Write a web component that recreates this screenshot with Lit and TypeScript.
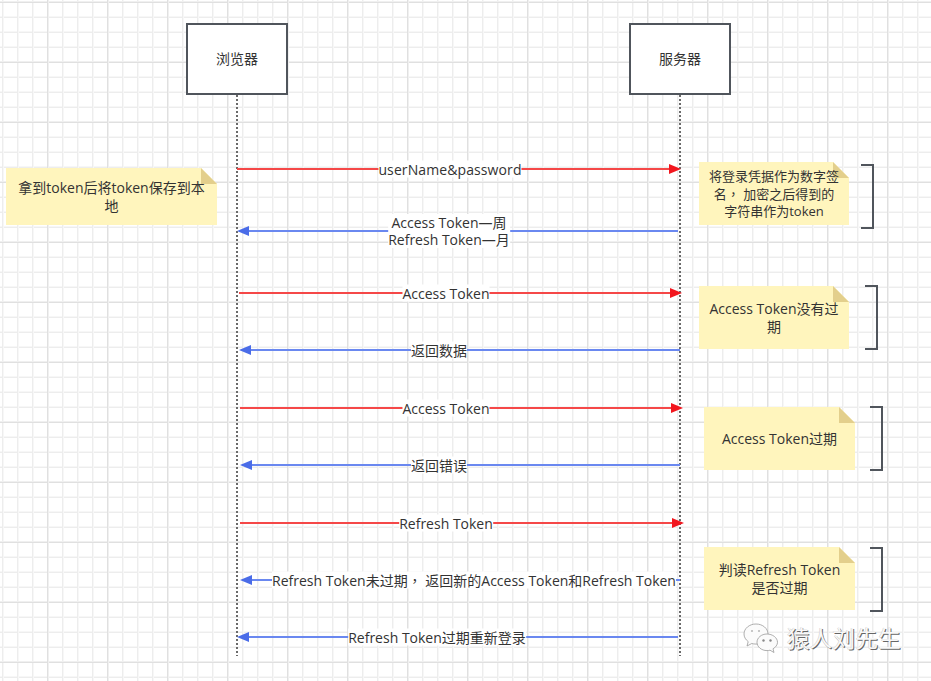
import { LitElement, html, css, svg } from "lit";
import { customElement } from "lit/decorators.js";

const RED = { line: "#f54848", head: "#f2161e" };
const BLUE = { line: "#6a88f0", head: "#4a6ce8" };

// x1 = tail, x2 = tip
const arrows = [
  { y: 169, x1: 237, x2: 681, c: RED, text: "userName&password", cx: 450, sp: 0.1 },
  { y: 231, x1: 678, x2: 237, c: BLUE, text: "Access Token—周\nRefresh Token—月", cx: 449, sp: 0 },
  { y: 293, x1: 239, x2: 682, c: RED, text: "Access Token", cx: 446, sp: 0 },
  { y: 350, x1: 680, x2: 239, c: BLUE, text: "返回数据", cx: 439, sp: 0 },
  { y: 408, x1: 240, x2: 683, c: RED, text: "Access Token", cx: 446, sp: 0 },
  { y: 465, x1: 680, x2: 240, c: BLUE, text: "返回错误", cx: 439, sp: 0 },
  { y: 523, x1: 240, x2: 684, c: RED, text: "Refresh Token", cx: 446, sp: 0 },
  { y: 580, x1: 680, x2: 240, c: BLUE, text: "Refresh Token未过期， 返回新的Access Token和Refresh Token", cx: 474, sp: 0 },
  { y: 637, x1: 678, x2: 237, c: BLUE, text: "Refresh Token过期重新登录", cx: 437, sp: 0 },
];

const notes = [
  { x: 6, y: 168, w: 211, h: 57, text: "拿到token后将token保存到本地", size: 14, lh: 18 },
  { x: 699, y: 162, w: 150, h: 63, text: "将登录凭据作为数字签\n名， 加密之后得到的\n字符串作为token", size: 13, lh: 17 },
  { x: 699, y: 286, w: 150, h: 63, text: "Access Token没有过期", size: 14, lh: 18 },
  { x: 704, y: 407, w: 151, h: 63, text: "Access Token过期", size: 14, lh: 18 },
  { x: 704, y: 547, w: 151, h: 63, text: "判读Refresh Token是否过期", size: 14, lh: 18 },
];

const brackets = [
  { x: 861, y1: 165, y2: 228, r: 873 },
  { x: 865, y1: 286, y2: 349, r: 877 },
  { x: 870, y1: 407, y2: 470, r: 882 },
  { x: 870, y1: 548, y2: 611, r: 882 },
];

// The full-width comma sits centred in its cell in the reference, as in the TC glyphs.
function withComma(text: string) {
  const parts = text.split("，");
  return parts.map((p, i) =>
    i === 0 ? p : html`<span class="tc">，</span>${p}`
  );
}

@customElement("app-root")
export class AppRoot extends LitElement {
  static styles = css`
    :host {
      display: block;
      width: 931px;
      height: 681px;
      overflow: hidden;
    }
    .canvas {
      position: relative;
      width: 931px;
      height: 681px;
      overflow: hidden;
      background-color: #fff;
      background-image:
        linear-gradient(to right, #e0e0e0 0 1px, #f0f0f0 1px 2px, transparent 2px),
        linear-gradient(to bottom, #f0f0f0 0 1px, #e0e0e0 1px 2px, transparent 2px),
        linear-gradient(to right, #ededed 0 1px, #f7f7f7 1px 2px, transparent 2px),
        linear-gradient(to bottom, #f7f7f7 0 1px, #ededed 1px 2px, transparent 2px);
      background-size: 60px 60px, 60px 60px, 15px 15px, 15px 15px;
      background-position: 47px 1px, 47px 1px, 2px 1px, 2px 1px;
      font-family: "Open Sans", "Noto Sans CJK SC", sans-serif;
      color: #333;
    }
    .tc {
      font-family: "Noto Sans CJK TC", sans-serif;
    }
    svg.lines {
      position: absolute;
      inset: 0;
    }
    .actor {
      position: absolute;
      top: 23px;
      width: 102px;
      height: 72px;
      box-sizing: border-box;
      border: 2px solid #50555c;
      padding-bottom: 2px;
      background: #fff;
      display: flex;
      align-items: center;
      justify-content: center;
      font-size: 14px;
    }
    .label {
      position: absolute;
      transform: translate(-50%, -50%);
      background: #fff;
      font-size: 14px;
      line-height: 17px;
      text-align: center;
      white-space: pre;
    }
    .note {
      position: absolute;
      display: flex;
      align-items: center;
      justify-content: center;
      box-sizing: border-box;
      padding: 0 10px;
      text-align: center;
      white-space: pre-line;
    }
    .note > div {
      position: relative;
    }
    .paper {
      position: absolute;
      inset: 0;
      background: #fff5bd;
      clip-path: polygon(0 0, calc(100% - 16px) 0, 100% 16px, 100% 100%, 0 100%);
    }
    .fold {
      position: absolute;
      top: 0;
      right: 0;
      width: 16px;
      height: 16px;
      background: #e3cf8c;
      clip-path: polygon(0 0, 100% 100%, 0 100%);
    }
    .mark {
      position: absolute;
      left: 743px;
      top: 621px;
      display: flex;
      align-items: center;
      gap: 8px;
    }
    .mark span {
      font-size: 22.5px;
      line-height: 36px;
      color: #f8f8f8;
      letter-spacing: 0.3px;
      text-shadow: 1px 1px 0 #666, -0.5px -0.5px 0 #ccc;
    }
  `;

  render() {
    return html`
      <div class="canvas">
        <div class="actor" style="left:186px">浏览器</div>
        <div class="actor" style="left:629px">服务器</div>

        <svg class="lines" width="931" height="681" viewBox="0 0 931 681">
          <line x1="237" y1="95" x2="237" y2="656" stroke="#6a6a6a" stroke-width="2" stroke-dasharray="2 2" />
          <line x1="680" y1="95" x2="680" y2="656" stroke="#6a6a6a" stroke-width="2" stroke-dasharray="2 2" />
          ${arrows.map((a) => {
            const dir = a.x2 > a.x1 ? 1 : -1;
            const base = a.x2 - dir * 12;
            return svg`
              <line x1=${a.x1} y1=${a.y} x2=${base} y2=${a.y} stroke=${a.c.line} stroke-width="2" />
              <polygon points="${a.x2},${a.y} ${base},${a.y - 5} ${base},${a.y + 5}" fill=${a.c.head} />
            `;
          })}
          ${brackets.map(
            (b) => svg`
              <polyline points="${b.x},${b.y1} ${b.r},${b.y1} ${b.r},${b.y2} ${b.x},${b.y2}"
                fill="none" stroke="#50555c" stroke-width="2" />
            `
          )}
        </svg>

        ${arrows.map(
          (a) => html`<div
            class="label"
            style="left:${a.cx}px;top:${a.y}px;letter-spacing:${a.sp}px"
          >${withComma(a.text)}</div>`
        )}
        ${notes.map(
          (n) => html`
            <div
              class="note"
              style="left:${n.x}px;top:${n.y}px;width:${n.w}px;height:${n.h}px;font-size:${n.size}px;line-height:${n.lh}px"
            >
              <i class="paper"></i>
              <i class="fold"></i>
              <div>${withComma(n.text)}</div>
            </div>
          `
        )}

        <div class="mark">
          <svg width="36" height="33" viewBox="0 0 36 33" fill="#fbfbfb" stroke="#9a9a9a" stroke-width="0.8">
            <path d="M13 1C6.400 1 1 5.400 1 11c0 3 1.600 5.700 4.200 7.600L4 23l4.800-2.500c1.300.4 2.700.6 4.200.6 5.500 0 12-3 12-10.100C25 5.400 19.600 1 13 1z" />
            <path d="M24 11c-5.500 0-10 3.700-10 8.300s4.500 8.300 10 8.300c1 0 2-.1 3-.4l4 2.300-1-3.700c2.700-1.500 4.500-3.900 4.500-6.500C34.500 14.700 29.500 11 24 11z" />
            <circle cx="20.500" cy="17.500" r="1.200" fill="#888" stroke="none" />
            <circle cx="27.500" cy="17.500" r="1.200" fill="#888" stroke="none" />
            <circle cx="9" cy="8" r="1.100" fill="#bbb" stroke="none" />
            <circle cx="16" cy="8" r="1.100" fill="#bbb" stroke="none" />
          </svg>
          <span>猿人刘先生</span>
        </div>
      </div>
    `;
  }
}
